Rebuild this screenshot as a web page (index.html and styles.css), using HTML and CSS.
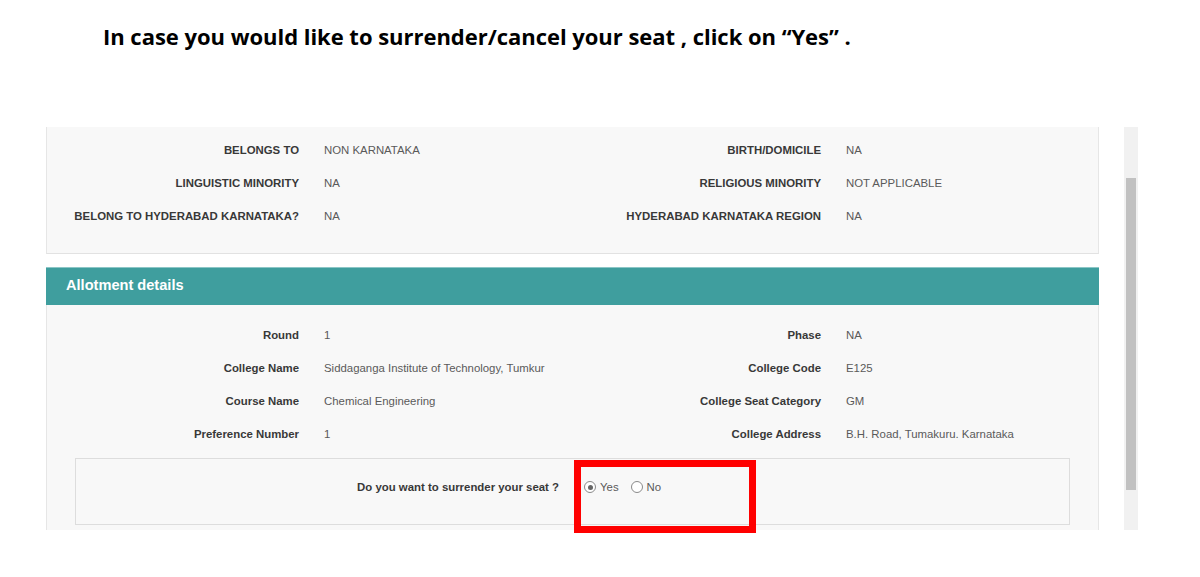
FILE: index.html
```html
<!DOCTYPE html>
<html>
<head>
<meta charset="utf-8">
<link rel="stylesheet" href="styles.css">
</head>
<body>
<h1 class="heading">In case you would like to surrender/cancel your seat , click on “Yes” .</h1>
<div class="frame">
  <div class="content">
    <div class="panel panel-top">
      <div class="row"><div class="lbl caps">BELONGS TO</div><div class="val">NON KARNATAKA</div><div class="lbl caps">BIRTH/DOMICILE</div><div class="val">NA</div></div>
      <div class="row"><div class="lbl caps">LINGUISTIC MINORITY</div><div class="val">NA</div><div class="lbl caps">RELIGIOUS MINORITY</div><div class="val">NOT APPLICABLE</div></div>
      <div class="row"><div class="lbl caps">BELONG TO HYDERABAD KARNATAKA?</div><div class="val">NA</div><div class="lbl caps">HYDERABAD KARNATAKA REGION</div><div class="val">NA</div></div>
    </div>
    <div class="section-head">Allotment details</div>
    <div class="panel panel-body">
      <div class="row"><div class="lbl">Round</div><div class="val">1</div><div class="lbl">Phase</div><div class="val">NA</div></div>
      <div class="row"><div class="lbl">College Name</div><div class="val">Siddaganga Institute of Technology, Tumkur</div><div class="lbl">College Code</div><div class="val">E125</div></div>
      <div class="row"><div class="lbl">Course Name</div><div class="val">Chemical Engineering</div><div class="lbl">College Seat Category</div><div class="val">GM</div></div>
      <div class="row"><div class="lbl">Preference Number</div><div class="val">1</div><div class="lbl">College Address</div><div class="val">B.H. Road, Tumakuru. Karnataka</div></div>
      <div class="question">
        <div class="q-label">Do you want to surrender your seat ?</div>
        <div class="options">
          <span class="radio checked"></span><span class="opt">Yes</span>
          <span class="radio"></span><span class="opt">No</span>
        </div>
      </div>
    </div>
    <div class="highlight"></div>
  </div>
  <div class="scrollbar"><div class="thumb"></div></div>
</div>
</body>
</html>
```

FILE: styles.css
```css
html, body {
  margin: 0;
  padding: 0;
  background: #ffffff;
}
body {
  width: 1200px;
  height: 577px;
  overflow: hidden;
  font-family: "Liberation Sans", Arial, sans-serif;
}
.heading {
  margin: 0;
  padding: 21px 0 0 103px;
  height: 127px;
  box-sizing: border-box;
  font-family: "Open Sans", Lato, sans-serif;
  font-weight: 700;
  font-size: 22px;
  line-height: 30px;
  color: #000;
  letter-spacing: -0.03px;
}
.frame {
  margin-left: 46px;
  width: 1092px;
  height: 403px;
  display: flex;
}
.content {
  position: relative;
  width: 1053px;
  height: 403px;
  flex: none;
}
.panel {
  background: #f8f8f8;
  border-left: 1px solid #e6e6e6;
  border-right: 1px solid #e6e6e6;
  box-sizing: border-box;
}
.panel-top {
  height: 127px;
  padding-top: 6px;
  border-bottom: 1px solid #e2e2e2;
}
.row {
  display: grid;
  grid-template-columns: 252px 248px 274px 1fr;
  height: 33px;
  align-items: center;
  font-size: 11.4px;
}
.lbl {
  text-align: right;
  font-weight: 700;
  color: #383838;
  white-space: nowrap;
}
.val {
  padding-left: 25px;
  color: #5a5a5a;
  white-space: nowrap;
}
.section-head {
  margin-top: 13px;
  height: 38px;
  background: #3f9e9e;
  border-top: 1px solid #8cc6c6;
  box-sizing: border-box;
  color: #fff;
  font-weight: 700;
  font-size: 14.6px;
  line-height: 34px;
  padding-left: 20px;
}
.panel-body {
  height: 225px;
  padding-top: 13px;
}
.question {
  margin: 8px 28px 0 28px;
  height: 67px;
  border: 1px solid #dddddd;
  box-sizing: border-box;
  display: flex;
  align-items: flex-start;
  padding-top: 21px;
  font-size: 11.4px;
  line-height: 14px;
}
.q-label {
  width: 483px;
  text-align: right;
  font-weight: 700;
  color: #383838;
  white-space: nowrap;
}
.options {
  display: flex;
  align-items: center;
  margin-left: 25px;
  color: #5a5a5a;
}
.radio {
  width: 12px;
  height: 12px;
  border: 1px solid #8a8a8a;
  border-radius: 50%;
  box-sizing: border-box;
  background: #fff;
  position: relative;
}
.radio.checked::after {
  content: "";
  position: absolute;
  left: 2.5px;
  top: 2.5px;
  width: 5px;
  height: 5px;
  border-radius: 50%;
  background: #666;
}
.opt {
  margin-left: 4px;
  margin-right: 12px;
}
.highlight {
  position: absolute;
  left: 528px;
  top: 333px;
  width: 182px;
  height: 73px;
  border: 7px solid #ff0000;
  box-sizing: border-box;
}
.scrollbar {
  margin-left: 25px;
  width: 14px;
  height: 403px;
  background: #f1f1f1;
  position: relative;
  flex: none;
}
.thumb {
  position: absolute;
  left: 2px;
  right: 2px;
  top: 51px;
  height: 312px;
  background: #c1c1c1;
}
```
